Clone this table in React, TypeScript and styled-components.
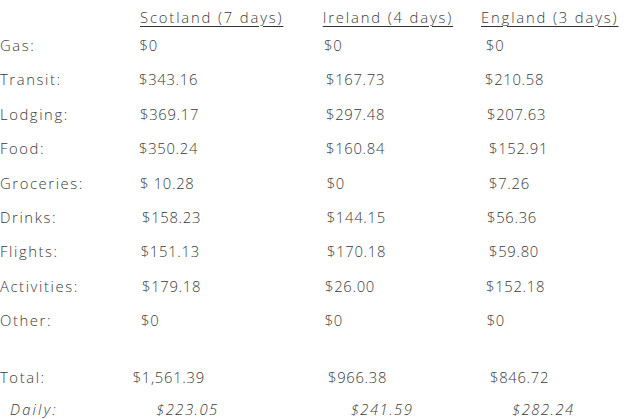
import React from "react";
import styled, { createGlobalStyle } from "styled-components";

const Global = createGlobalStyle`
  html, body { margin: 0; padding: 0; background: #ffffff; }
  body { font-family: "Open Sans", "Inter", sans-serif; font-weight: 300; color: #3a3a3a; }
`;

const Sheet = styled.div`
  display: flex;
  flex-direction: column;
  padding-top: 7px;
  width: 629px;
`;

const Row = styled.div<{ $gap: number }>`
  display: grid;
  grid-template-columns: 132px 190px 159px 1fr;
  margin-top: ${(p) => p.$gap}px;
  height: 20px;
  line-height: 20px;
  font-size: 14.8px;
  letter-spacing: 0.7px;
  white-space: nowrap;
`;

const Label = styled.div<{ $italic?: boolean; $x?: number }>`
  padding-left: ${(p) => p.$x ?? 0}px;
  letter-spacing: ${(p) => (p.$italic ? 2.2 : 1.6)}px;
  font-style: ${(p) => (p.$italic ? "italic" : "normal")};
`;

const Cell = styled.div<{ $x: number; $italic?: boolean }>`
  padding-left: ${(p) => p.$x}px;
  letter-spacing: ${(p) => (p.$italic ? 1.5 : 0.7)}px;
  font-style: ${(p) => (p.$italic ? "italic" : "normal")};
`;

const Heading = styled.span`
  letter-spacing: 1.85px;
  text-decoration: underline;
  text-decoration-color: #333;
  text-underline-offset: 3px;
  text-decoration-thickness: 1px;
`;

type Line = { label: string; vals: [string, number][]; gap: number; italic?: boolean; lx?: number };

const lines: Line[] = [
  { label: "Gas:", gap: 8, vals: [["$0", 7.5], ["$0", 2], ["$0", 5]] },
  { label: "Transit:", gap: 14.4, vals: [["$343.16", 7], ["$167.73", 4], ["$210.58", 4]] },
  { label: "Lodging:", gap: 14.4, vals: [["$369.17", 8], ["$297.48", 4], ["$207.63", 6]] },
  { label: "Food:", gap: 14.4, vals: [["$350.24", 7], ["$160.84", 4], ["$152.91", 8]] },
  { label: "Groceries:", gap: 14.4, vals: [["$ 10.28", 8], ["$0", 4.7], ["$7.26", 8]] },
  { label: "Drinks:", gap: 14.4, vals: [["$158.23", 10], ["$144.15", 4.7], ["$56.36", 6]] },
  { label: "Flights:", gap: 14.4, vals: [["$151.13", 8.7], ["$170.18", 5], ["$59.80", 8]] },
  { label: "Activities:", gap: 14.4, vals: [["$179.18", 10], ["$26.00", 3], ["$152.18", 5]] },
  { label: "Other:", gap: 14.4, vals: [["$0", 9], ["$0", 2.7], ["$0", 5.7]] },
  { label: "Total:", gap: 37, vals: [["$1,561.39", 0.7], ["$966.38", 6], ["$846.72", 9]] },
  { label: "Daily:", gap: 12, italic: true, lx: 10, vals: [["$223.05", 24], ["$241.59", 28.7], ["$282.24", 31]] },
];

export default function App() {
  return (
    <>
      <Global />
      <Sheet>
        <Row $gap={0}>
          <Label />
          <Cell $x={8}><Heading>Scotland (7 days)</Heading></Cell>
          <Cell $x={0.7}><Heading>Ireland (4 days)</Heading></Cell>
          <Cell $x={0}><Heading>England (3 days)</Heading></Cell>
        </Row>
        {lines.map((l) => (
          <Row key={l.label} $gap={l.gap}>
            <Label $italic={l.italic} $x={l.lx}>{l.label}</Label>
            {l.vals.map(([v, x], i) => (
              <Cell key={i} $x={x} $italic={l.italic}>{v}</Cell>
            ))}
          </Row>
        ))}
      </Sheet>
    </>
  );
}
